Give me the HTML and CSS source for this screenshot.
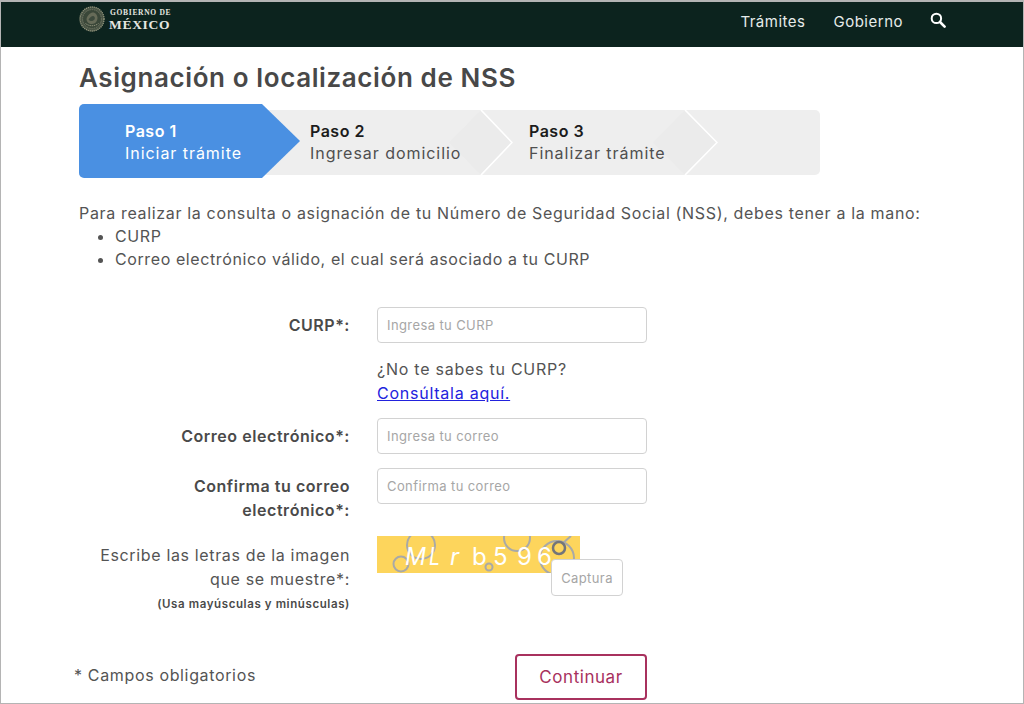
FILE: index.html
```html
<!DOCTYPE html>
<html lang="es">
<head>
<meta charset="utf-8">
<title>Asignación o localización de NSS</title>
<link rel="stylesheet" href="styles.css">
</head>
<body>
<div class="frame">
  <header class="topbar">
    <a class="brand" href="#">
      <svg class="emblem" width="26" height="26" viewBox="0 0 26 26">
        <circle cx="13" cy="13" r="12.4" fill="#4a5546"/>
        <circle cx="13" cy="13" r="12" fill="none" stroke="#9a9b82" stroke-width="1.3" stroke-dasharray="1 1"/>
        <circle cx="13" cy="13" r="9.4" fill="#3a4739" stroke="#6f7462" stroke-width="1" stroke-dasharray="1.5 .8"/>
        <path d="M7.5 13c1-4 4-6.5 6.5-6.5s4.500 2.500 4.500 5.500-2.500 6-5.500 6-5.500-2-5.500-5z" fill="#666b58"/>
        <path d="M9.500 13.500c1.500-2 3-3.500 4.500-3.500s2.500 2 1.500 3.500-4 2.500-6 0z" fill="#3d4a3d"/>
        <path d="M6.500 17.500c4 3 9 3 13 0" fill="none" stroke="#8d8f78" stroke-width="1" stroke-dasharray="1.500 .7"/>
      </svg>
      <span class="brand-text">
        <span class="brand-top">GOBIERNO DE</span>
        <span class="brand-main">MÉXICO</span>
      </span>
    </a>
    <nav class="nav">
      <a href="#">Trámites</a>
      <a href="#">Gobierno</a>
      <svg class="search" width="16" height="16" viewBox="0 0 16 16">
        <circle cx="6.400" cy="6.400" r="4.700" fill="none" stroke="#fff" stroke-width="2"/>
        <path d="M10 10l4.600 4.600" stroke="#fff" stroke-width="2.600" stroke-linecap="round"/>
      </svg>
    </nav>
  </header>

  <main class="content">
    <h1 class="title">Asignación o localización de NSS</h1>

    <div class="steps">
      <div class="step step-active">
        <strong>Paso 1</strong>
        <span>Iniciar trámite</span>
      </div>
      <div class="step step-two">
        <svg class="chev" width="66" height="65" viewBox="-16 0 66 65">
          <path d="M18 0L50 32.500 18 65 -14 32.500z" fill="#ebebeb"/>
          <path d="M18 0L49 32.500 18 65" fill="none" stroke="#fff" stroke-width="1.600"/>
        </svg>
        <strong>Paso 2</strong>
        <span>Ingresar domicilio</span>
      </div>
      <div class="step step-three">
        <svg class="chev" width="66" height="65" viewBox="-16 0 66 65">
          <path d="M17 0L49 32.500 17 65 -15 32.500z" fill="#ebebeb"/>
          <path d="M17 0L49 32.500 17 65" fill="none" stroke="#fff" stroke-width="1.600"/>
        </svg>
        <strong>Paso 3</strong>
        <span>Finalizar trámite</span>
      </div>
      <div class="step-fill"></div>
    </div>

    <p class="intro">Para realizar la consulta o asignación de tu Número de Seguridad Social (NSS), debes tener a la mano:</p>
    <ul class="needs">
      <li>CURP</li>
      <li>Correo electrónico válido, el cual será asociado a tu CURP</li>
    </ul>

    <form class="form">
      <label class="label strong label-curp">CURP*:</label>
      <div class="field">
        <input class="input" type="text" placeholder="Ingresa tu CURP">
        <p class="hint">¿No te sabes tu CURP?<br><a href="#">Consúltala aquí.</a></p>
      </div>

      <label class="label strong label-next">Correo electrónico*:</label>
      <div class="field"><input class="input" type="text" placeholder="Ingresa tu correo"></div>

      <label class="label strong label-next">Confirma tu correo electrónico*:</label>
      <div class="field"><input class="input" type="text" placeholder="Confirma tu correo"></div>

      <div class="label label-captcha">
        Escribe las letras de la imagen que se muestre*:
        <small>(Usa mayúsculas y minúsculas)</small>
      </div>
      <div class="field captcha-field">
        <svg class="captcha" width="203" height="37" viewBox="0 0 203 37">
          <rect width="203" height="37" fill="#fdd55c"/>
          <g fill="none" stroke="#a9a9a6" stroke-width="2">
            <circle cx="24" cy="28" r="7.500"/>
            <circle cx="44" cy="9" r="14"/>
            <circle cx="112" cy="31" r="3.500"/>
            <circle cx="140" cy="2" r="13"/>
            <circle cx="180" cy="22" r="17"/>
            <path d="M186 7l8-7"/>
          </g>
          <circle cx="182" cy="12" r="6" fill="none" stroke="#73757a" stroke-width="2.500"/>
          <g class="captcha-text">
            <text x="28" y="29" font-style="italic" textLength="21" lengthAdjust="spacingAndGlyphs">M</text>
            <text x="52" y="29" font-style="italic" textLength="11" lengthAdjust="spacingAndGlyphs">L</text>
            <text x="73" y="29" font-style="italic">r</text>
            <text x="95" y="29">b</text>
            <text x="116" y="29">5</text>
            <text x="140" y="29">9</text>
            <text x="160" y="29">6</text>
          </g>
        </svg>
        <input class="input input-captcha" type="text" placeholder="Captura">
      </div>
    </form>

    <div class="footer-row">
      <span class="required">* Campos obligatorios</span>
      <button class="btn" type="button">Continuar</button>
    </div>
  </main>
</div>
</body>
</html>
```

FILE: styles.css
```css
* { box-sizing: border-box; }
html, body { margin: 0; padding: 0; }
body {
  font-family: "Inter", "Liberation Sans", sans-serif;
  color: #545454;
  background: #fff;
}
.frame {
  width: 1024px;
  height: 704px;
  overflow: hidden;
  border: 1px solid #b4b4b4;
  border-top-width: 2px;
}
.topbar {
  height: 45px;
  background: #0c231e;
  display: flex;
  justify-content: space-between;
  align-items: center;
  padding: 0 78px 7px;
}
.brand {
  display: flex;
  align-items: center;
  gap: 5px;
  text-decoration: none;
  margin-top: -4px;
}
.brand-text {
  display: flex;
  flex-direction: column;
  font-family: "Liberation Serif", serif;
  font-weight: 700;
  color: #e6e6e0;
}
.brand-top { font-size: 7.5px; letter-spacing: 0.7px; line-height: 10px; white-space: nowrap; }
.brand-main { font-size: 13.5px; letter-spacing: 0.7px; line-height: 13px; margin-left: -1px; }
.nav {
  display: flex;
  align-items: center;
  margin-right: -1px;
}
.nav a {
  color: #e6ecea;
  text-decoration: none;
  font-size: 15px;
  letter-spacing: 0.5px;
  margin-right: 28px;
}
.nav a + a { margin-right: 27px; }
.search { margin-top: -3px; }

.content { padding: 0 78px; }
.title {
  margin: 15px 0 0;
  font-size: 26px;
  line-height: 32px;
  font-weight: 600;
  letter-spacing: 0.6px;
  color: #484848;
  white-space: nowrap;
}
.steps {
  display: flex;
  width: 741px;
  height: 65px;
  margin-top: 16px;
  background: #eeeeee;
  border-radius: 0 5px 5px 0;
}
.step {
  position: relative;
  display: flex;
  flex-direction: column;
  justify-content: center;
  padding-bottom: 2px;
  font-size: 16px;
  line-height: 22px;
  letter-spacing: 0.95px;
  color: #4f4f4f;
  white-space: nowrap;
}
.step strong, .step span { position: relative; }
.step strong { color: #1c1c1c; font-weight: 600; letter-spacing: 0.5px; }
.step-active {
  width: 221px;
  height: 74px;
  margin-top: -6px;
  padding: 2px 0 0 46px;
  color: #fff;
  background: #4a90e2;
  border-radius: 5px 0 0 5px;
  clip-path: polygon(0 0, 183px 0, 100% 50%, 183px 100%, 0 100%);
}
.step-active strong { color: #fff; }
.step-two { width: 213px; padding-left: 10px; }
.step-three { width: 205px; padding-left: 16px; }
.step-fill { flex: 1; }
.chev { position: absolute; right: 0; top: 0; }

.intro {
  margin: 27px 0 0;
  font-size: 16px;
  line-height: 23px;
  letter-spacing: 0.66px;
  white-space: nowrap;
}
.needs {
  margin: 0;
  padding-left: 36px;
  font-size: 16px;
  line-height: 23px;
  letter-spacing: 0.6px;
}
.form {
  display: grid;
  grid-template-columns: 271px 270px;
  column-gap: 27px;
  row-gap: 14px;
  margin-top: 36px;
}
.label {
  padding-left: 20px;
  text-align: right;
  font-size: 16px;
  line-height: 24px;
  letter-spacing: 0.55px;
}
.strong { font-weight: 600; color: #4a4a4a; }
.label-curp, .label-next { padding-top: 6px; }
.label-captcha { margin-top: 7px; letter-spacing: 0.65px; }
.label-captcha small {
  display: block;
  margin-top: 4px;
  font-size: 11.5px;
  line-height: 18px;
  letter-spacing: 0.6px;
  font-weight: 600;
  color: #4a4a4a;
}
.input {
  display: block;
  width: 270px;
  height: 36px;
  padding: 0 9px;
  border: 1px solid #d2d2d2;
  border-radius: 4px;
  background: #fff;
  font-family: inherit;
  font-size: 13px;
  letter-spacing: 0.4px;
  color: #555;
}
.input::placeholder { color: #a6a6a6; opacity: 1; }
.hint {
  margin: 14px 0 -1px;
  font-size: 16px;
  line-height: 24px;
  letter-spacing: 0.75px;
}
.hint a { color: #2222dd; }
.captcha-field { display: flex; align-items: flex-start; }
.captcha { display: block; flex: none; }
.captcha-text { fill: #fff; font-family: "Inter", sans-serif; font-size: 24px; }
.input-captcha {
  flex: none;
  width: 72px;
  height: 37px;
  margin: 23px 0 0 -29px;
  position: relative;
  text-align: center;
  padding: 0 4px;
}
.footer-row {
  display: flex;
  justify-content: space-between;
  align-items: center;
  width: 573px;
  margin: 41px 0 0 -5px;
}
.required { font-size: 16px; letter-spacing: 0.65px; padding-bottom: 4px; }
.btn {
  width: 132px;
  height: 46px;
  background: #fff;
  border: 2px solid #a8315e;
  border-radius: 4px;
  color: #a8315e;
  font-family: inherit;
  font-size: 17px;
  letter-spacing: 0.55px;
}
```
